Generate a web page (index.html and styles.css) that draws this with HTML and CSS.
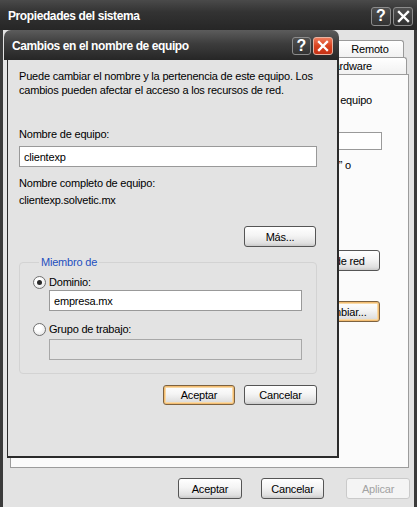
FILE: index.html
```html
<!DOCTYPE html>
<html lang="es">
<head>
<meta charset="utf-8">
<title>Propiedades del sistema</title>
<link rel="stylesheet" href="styles.css">
</head>
<body>
<div class="outer">
  <div class="titlebar">
    <span class="title">Propiedades del sistema</span>
    <div class="cbtns">
      <span class="cbtn help">?</span>
      <span class="cbtn"><svg width="13" height="13" viewBox="0 0 13 13"><path d="M2 2L11 11M11 2L2 11" stroke="#fff" stroke-width="2.4" stroke-linecap="square"/></svg></span>
    </div>
  </div>
  <div class="obody">
    <div class="tabrow back">
      <span class="tab grow"></span>
      <span class="tab w-remoto">Remoto</span>
    </div>
    <div class="tabrow front">
      <span class="tab grow"></span>
      <span class="tab w-hard">Hardware</span>
    </div>
    <div class="panel">
      <p class="ptext t1">su equipo</p>
      <input class="pinput" type="text" value="">
      <p class="ptext t2">” o</p>
      <button class="btn pbtn b1">Id. de red</button>
      <button class="btn pbtn default b2">Cambiar...</button>
    </div>
    <div class="obtns">
      <button class="btn ob">Aceptar</button>
      <button class="btn ob c">Cancelar</button>
      <button class="btn ob a disabled">Aplicar</button>
    </div>
  </div>
</div>

<div class="dialog">
  <div class="dtitle">
    <span class="title">Cambios en el nombre de equipo</span>
    <div class="cbtns">
      <span class="cbtn small help">?</span>
      <span class="cbtn small red"><svg width="12" height="12" viewBox="0 0 12 12"><path d="M2 2L10 10M10 2L2 10" stroke="#fff" stroke-width="2.3" stroke-linecap="square"/></svg></span>
    </div>
  </div>
  <div class="dbody">
    <p class="intro">Puede cambiar el nombre y la pertenencia de este equipo. Los cambios pueden afectar el acceso a los recursos de red.</p>
    <p class="lbl l-name">Nombre de equipo:</p>
    <input class="field" type="text" value="clientexp">
    <p class="lbl l-full">Nombre completo de equipo:</p>
    <p class="lbl l-fqdn">clientexp.solvetic.mx</p>
    <div class="mas-row"><button class="btn dbtn">Más...</button></div>
    <fieldset class="group">
      <legend>Miembro de</legend>
      <div class="radio-row"><span class="radio on"></span><span>Dominio:</span></div>
      <input class="field sub" type="text" value="empresa.mx">
      <div class="radio-row r2"><span class="radio"></span><span>Grupo de trabajo:</span></div>
      <input class="field sub dis" type="text" value="" disabled>
    </fieldset>
    <div class="dbtns">
      <button class="btn dbtn default">Aceptar</button>
      <button class="btn dbtn">Cancelar</button>
    </div>
  </div>
</div>
</body>
</html>
```
FILE: styles.css
```css
* { box-sizing: border-box; }
html, body { margin: 0; padding: 0; }
body {
  width: 417px;
  height: 507px;
  overflow: hidden;
  position: relative;
  font-family: "Liberation Sans", Arial, sans-serif;
  font-size: 11px;
  letter-spacing: -0.2px;
  color: #000;
  background: #3a3a3a;
}
p { margin: 0; line-height: 14px; }

/* ---------- outer window ---------- */
.outer {
  width: 417px;
  height: 507px;
  display: flex;
  flex-direction: column;
  background: #3b3b3b;
}
.titlebar {
  height: 30px;
  flex: none;
  display: flex;
  align-items: center;
  padding: 2px 4px 0 8px;
  background: linear-gradient(#4a4a4a, #333 40%, #262626);
}
.title {
  flex: 1;
  color: #fff;
  font-weight: bold;
  font-size: 12px;
  letter-spacing: -0.4px;
  white-space: nowrap;
}
.cbtns { display: flex; gap: 2px; }
.cbtn {
  width: 20px;
  height: 19px;
  border: 1px solid #8c8c8c;
  border-radius: 3px;
  background: linear-gradient(#505050, #323232);
  color: #fff;
  display: flex;
  align-items: center;
  justify-content: center;
  font-weight: bold;
  font-size: 16px;
  letter-spacing: 0;
}
.cbtn.small { height: 18px; }
.cbtn.small.help { width: 19px; }
.cbtn.red {
  background: linear-gradient(#ef7b5b, #d9431f 50%, #c53115);
  border-color: #e9b4a2;
}
.obody {
  flex: 1;
  margin: 0 3px;
  background: #e3e3e3;
  padding: 10px 5px 0 7px;
  display: flex;
  flex-direction: column;
}
.tabrow { display: flex; height: 17px; flex: none; overflow: hidden; }
.tabrow.back { margin-right: 5px; }
.tabrow.front { margin-right: 2px; }
.tab {
  flex: none;
  border: 1px solid #9a9a9a;
  border-bottom: none;
  border-radius: 3px 3px 0 0;
  background: linear-gradient(#ffffff, #f1f1f1);
  display: flex;
  align-items: center;
  justify-content: center;
  padding: 0 6px;
  white-space: nowrap;
}
.w-remoto { width: 68px; }
.w-hard { width: 116px; }
.tab.grow { flex: 1; }
.panel {
  height: 394px;
  flex: none;
  border: 1px solid #9c9c9c;
  background: #fbfbfb;
  overflow: hidden;
  display: flex;
  flex-direction: column;
  align-items: flex-end;
}
.ptext { white-space: nowrap; }
.t1 { margin: 18px 36px 0 0; }
.pinput {
  margin: 25px 26px 0 0;
  width: 250px;
  height: 18px;
  border: 1px solid #9a9a9a;
  background: #fff;
}
.t2 { margin: 8px 57px 0 0; }
.pbtn { width: 75px; margin-right: 28px; }
.b1 { margin-top: 78px; }
.b2 { margin-top: 30px; }
.obtns {
  display: flex;
  justify-content: flex-end;
  margin: 10px -1px 0 0;
}
.ob { width: 64px; height: 20px; }
.ob.c { margin-left: 19px; width: 63px; }
.ob.a { margin-left: 22px; }

/* ---------- buttons ---------- */
.btn {
  font: inherit;
  letter-spacing: -0.2px;
  height: 21px;
  border: 1px solid #555;
  border-radius: 3px;
  background: linear-gradient(#ffffff, #f4f4f4 45%, #e0e0e0 85%, #c9c9c9);
  color: #000;
  padding: 0;
  display: flex;
  align-items: center;
  justify-content: center;
  white-space: nowrap;
}
.btn.default {
  border-color: #7d6240;
  box-shadow: inset 0 0 0 1px #f3bd72, inset 0 0 0 2px #f8d9a6;
}
.btn.disabled {
  border-color: #cacaca;
  background: #f4f4f4;
  color: #a2a2a2;
}

/* ---------- dialog ---------- */
.dialog {
  position: absolute;
  left: 4px;
  top: 30px;
  width: 335px;
  height: 428px;
  display: flex;
  flex-direction: column;
  background: #e3e3e3;
  border-radius: 7px 7px 0 0;
}
.dtitle {
  height: 30px;
  flex: none;
  display: flex;
  align-items: center;
  padding: 2px 6px 0 8px;
  border-radius: 7px 7px 0 0;
  background: linear-gradient(#5c5c5c, #3d3d3d 45%, #262626);
}
.dbody {
  flex: 1;
  margin-left: 3px;
  border-left: 1px solid #2b2b2b;
  border-right: 2px solid #2b2b2b;
  border-bottom: 2px solid #2b2b2b;
  padding: 9px 20px 0 11px;
  display: flex;
  flex-direction: column;
}
.l-name { margin-top: 30px; }
.field {
  font: inherit;
  letter-spacing: -0.2px;
  height: 21px;
  margin-top: 5px;
  width: 100%;
  border: 1px solid #999;
  background: #fff;
  padding: 0 4px;
  color: #000;
}
.l-full { margin-top: 9px; }
.l-fqdn { margin-top: 3px; }
.mas-row { display: flex; justify-content: flex-end; margin-top: 19px; padding-right: 1px; }
.dbtn { width: 72px; }
.group {
  margin: 8px 0 0 0;
  border: 1px solid #d3d3d3;
  border-radius: 4px;
  padding: 6px 14px 13px 13px;
  min-width: 0;
}
.group legend {
  color: #1e4fbf;
  padding: 0 2px;
  margin-left: 6px;
  line-height: 14px;
}
.radio-row { display: flex; align-items: center; height: 14px; gap: 3px; }
.radio-row.r2 { margin-top: 11px; }
.radio {
  width: 13px;
  height: 13px;
  border-radius: 50%;
  border: 1px solid #707070;
  background: radial-gradient(circle at 40% 35%, #fff 30%, #dcdcdc);
  position: relative;
  flex: none;
}
.radio.on::after {
  content: "";
  position: absolute;
  left: 3px;
  top: 3px;
  width: 5px;
  height: 5px;
  border-radius: 50%;
  background: #2a2a2a;
}
.field.sub { margin: 1px 0 0 16px; width: 253px; }
.field.sub.dis { margin-top: 3px; background: #e4e4e4; border-color: #a8a8a8; }
.dbtns {
  display: flex;
  justify-content: flex-end;
  gap: 9px;
  margin-top: 11px;
}
.dbtns .dbtn { height: 20px; }
.dbtns .dbtn + .dbtn { width: 73px; }
```
